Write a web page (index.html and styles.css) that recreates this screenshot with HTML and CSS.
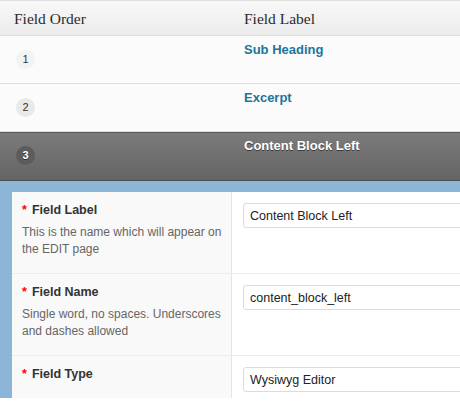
FILE: index.html
```html
<!DOCTYPE html>
<html lang="en">
<head>
  <meta charset="UTF-8">
  <title>Fields</title>
  <link rel="stylesheet" href="styles.css">
</head>
<body>
  <div class="fields">
    <div class="row head">
      <div class="cell">Field Order</div>
      <div class="cell">Field Label</div>
    </div>

    <div class="row field">
      <div class="cell"><span class="order">1</span></div>
      <div class="cell"><a class="name" href="#">Sub Heading</a></div>
    </div>

    <div class="row field hover">
      <div class="cell"><span class="order">2</span></div>
      <div class="cell"><a class="name" href="#">Excerpt</a></div>
    </div>

    <div class="row field open">
      <div class="cell"><span class="order">3</span></div>
      <div class="cell"><a class="name" href="#">Content Block Left</a></div>
    </div>

    <div class="settings">
      <div class="panel">
        <div class="opt">
          <div class="label">
            <div class="title"><span class="req">*</span>Field Label</div>
            <p class="desc">This is the name which will appear on the EDIT page</p>
          </div>
          <div class="value"><input class="text" type="text" value="Content Block Left"></div>
        </div>
        <div class="opt">
          <div class="label">
            <div class="title"><span class="req">*</span>Field Name</div>
            <p class="desc">Single word, no spaces. Underscores and dashes allowed</p>
          </div>
          <div class="value"><input class="text" type="text" value="content_block_left"></div>
        </div>
        <div class="opt">
          <div class="label">
            <div class="title"><span class="req">*</span>Field Type</div>
          </div>
          <div class="value"><input class="text" type="text" value="Wysiwyg Editor"></div>
        </div>
      </div>
    </div>
  </div>
</body>
</html>
```

FILE: styles.css
```css
body {
  margin: 0;
  font-family: "Liberation Sans", Arial, sans-serif;
  font-size: 13px;
  line-height: 17px;
  color: #333;
  background: #fff;
}
.fields {
  width: 460px;
  overflow: hidden;
}
.row {
  display: grid;
  grid-template-columns: 230px 1fr;
}
.cell {
  padding: 0 14px;
}
.head {
  height: 34px;
  border-top: 1px solid #dfdfdf;
  border-bottom: 1px solid #dcdcdc;
  background: linear-gradient(#f8f8f8, #ececec);
  font-family: "Liberation Serif", Georgia, serif;
  font-size: 15.5px;
  color: #2a2a2a;
  align-items: center;
}
.field {
  height: 47px;
  background: #fbfbfb;
  border-bottom: 1px solid #dfdfdf;
}
.field .cell {
  padding-top: 5px;
}
.field .cell:first-child {
  padding-top: 14px;
  padding-left: 16px;
}
.order {
  display: inline-block;
  width: 19px;
  height: 19px;
  line-height: 19px;
  border-radius: 50%;
  background: #f3f3f3;
  text-align: center;
  font-size: 11px;
  color: #333;
}
.hover .order {
  background: #e9e9e9;
}
.name {
  color: #21759b;
  font-weight: bold;
  text-decoration: none;
}
.open {
  background: linear-gradient(#7b7b7b, #646464);
  border-top: 1px solid #5b5b5b;
  border-bottom: 1px solid #4f4f4f;
  height: 47px;
}
.open .cell {
  padding-top: 4px;
}
.open .cell:first-child {
  padding-top: 13px;
}
.open .order {
  background: #5c5c5c;
  color: #fff;
  font-weight: bold;
  text-shadow: 0 1px 0 #333;
}
.open .name {
  color: #fff;
  text-shadow: 0 1px 0 #3a3a3a;
}
.settings {
  background: #8db5d7;
  padding: 11px 0 0 12px;
}
.panel {
  background: #fff;
  width: 700px;
}
.opt {
  display: grid;
  grid-template-columns: 220px 1fr;
  border-top: 1px solid #ececec;
}
.opt:first-child {
  border-top: 0;
}
.label {
  background: #f9f9f9;
  border-right: 1px solid #e4e4e4;
  padding: 10px 4px 15px 10px;
  font-size: 12px;
}
.title {
  font-weight: bold;
  font-size: 12.5px;
  color: #333;
}
.req {
  color: #f00;
  margin-right: 5px;
}
.desc {
  margin: 5px 0 0;
  color: #666;
}
.value {
  padding: 11px 0 0 11px;
}
.text {
  box-sizing: border-box;
  width: 400px;
  height: 25px;
  border: 1px solid #dcdcdc;
  border-radius: 3px;
  padding: 0 6px;
  font-family: "Liberation Sans", Arial, sans-serif;
  font-size: 12.5px;
  color: #222;
  background: #fff;
}
```
